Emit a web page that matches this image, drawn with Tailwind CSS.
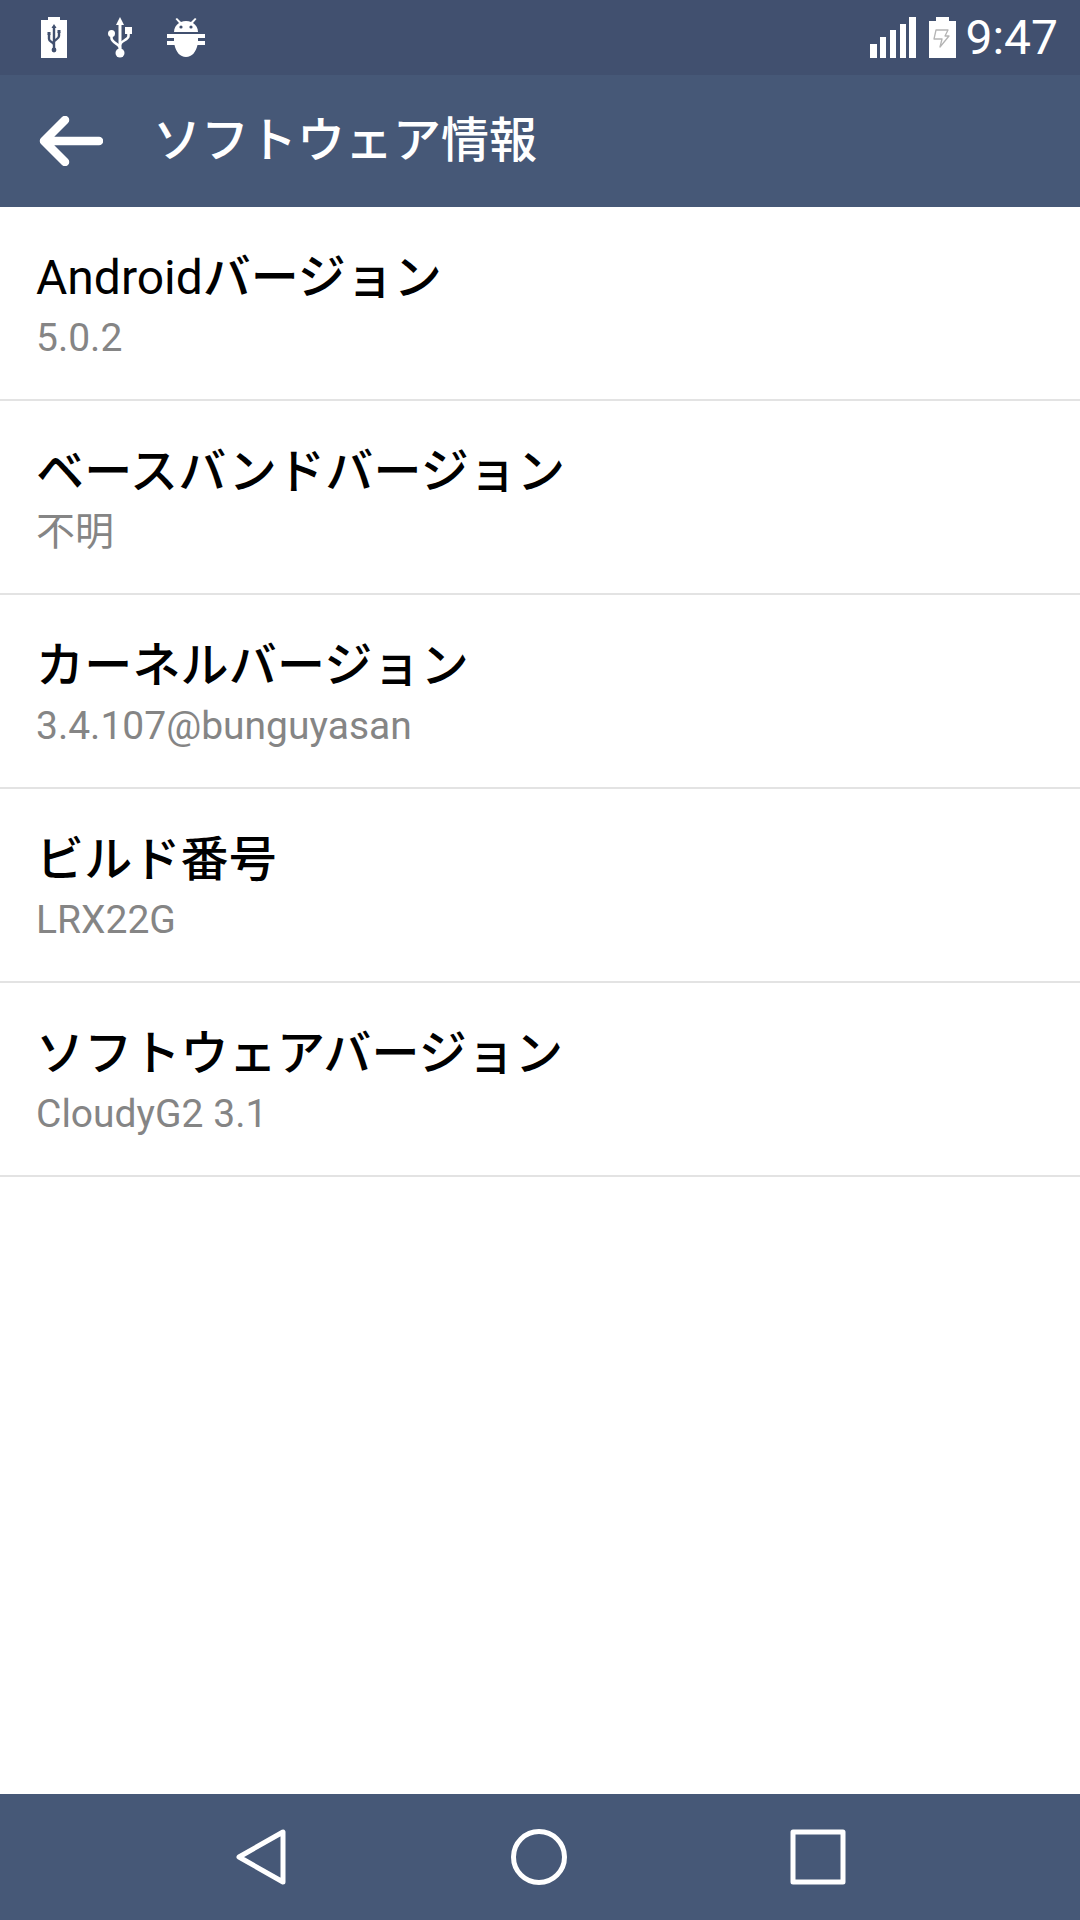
<!DOCTYPE html>
<html lang="ja">
<head>
  <meta charset="UTF-8">
  <meta name="viewport" content="width=device-width, initial-scale=1.0">
  <title>ソフトウェア情報</title>
  <script src="https://cdn.jsdelivr.net/npm/@tailwindcss/browser@4"></script>
</head>
<body class="bg-white">
<div class="flex h-[1920px] w-[1080px] flex-col overflow-hidden font-['Roboto','Noto_Sans_CJK_JP',sans-serif]">

  <!-- Status bar -->
  <div class="flex h-[75px] shrink-0 items-center bg-[#41506f] pl-[41px] pr-[22px] text-white">
    <svg class="h-[41px] w-[26px]" viewBox="0 0 26 41">
      <path fill="#fff" d="M7 0h12v3h7v38H0V3h7z"/>
      <g fill="none" stroke="#41506f" stroke-width="2.400">
        <path d="M13 9v24M8 17v5c0 3 5 3 5 6M18 15v4c0 3-5 4-5 6"/>
      </g>
      <path fill="#41506f" d="M13 7l2.500 4h-5zM6.500 15h3v3h-3zM16.500 13h3v3h-3z"/>
      <circle cx="13" cy="33" r="2.400" fill="#41506f"/>
    </svg>
    <svg class="ml-[41px] h-[41px] w-[24px]" viewBox="0 0 24 41">
      <path fill="#fff" d="M12 0l4 8h-2.500v25h-3V8H8z"/>
      <circle cx="12" cy="36" r="4.500" fill="#fff"/>
      <circle cx="3.500" cy="16.500" r="3.500" fill="#fff"/>
      <path fill="#fff" d="M17 10h7v7h-7z"/>
      <path fill="none" stroke="#fff" stroke-width="2.600" d="M3.500 18v3c0 5 8.500 6 8.500 10M20.500 16v3c0 4-8.500 5-8.500 9"/>
    </svg>
    <svg class="ml-[35px] h-[39px] w-[38px]" viewBox="0 0 38 39">
      <path fill="#fff" d="M7 14c0-4 2-7 5-9L8.500 1 10 0l4 4c3-1.500 7-1.500 10 0l4-4 1.500 1L26 5c3 2 5 5 5 9z"/>
      <circle cx="14" cy="9" r="1.600" fill="#41506f"/>
      <circle cx="24" cy="9" r="1.600" fill="#41506f"/>
      <path fill="#fff" d="M0 16h38v4H31v3h7v4h-7.500C29 34 25 39 19 39S9 34 7.500 27H0v-4h7v-3H0z"/>
    </svg>

    <svg class="ml-auto h-[41px] w-[46px]" viewBox="0 0 46 41" fill="#fff">
      <path d="M0 27h7v14H0zM10 20h6v21h-6zM20 13h6v28h-6zM30 7h6v34h-6zM39 0h7v41h-7z"/>
    </svg>
    <svg class="ml-[13px] h-[41px] w-[27px]" viewBox="0 0 27 41">
      <path fill="#fff" d="M7 0h13v4h7v37H0V4h7z"/>
      <path fill="none" stroke="#b5b5b5" stroke-width="1.300" stroke-linejoin="round" d="M7 13h12l-3 6h4l-9 11 2-8H5z"/>
    </svg>
    <span class="ml-[9px] text-[48px] leading-none">9:47</span>
  </div>

  <!-- Action bar -->
  <div class="flex h-[132px] shrink-0 items-center bg-[#465877] pl-[39px] text-white">
    <svg class="h-[50px] w-[64px]" viewBox="0 0 64 50" fill="none" stroke="#fff" stroke-width="8.500" stroke-linecap="round" stroke-linejoin="round">
      <path d="M60 25H5M26 4L5 25l21 21"/>
    </svg>
    <span class="ml-[50px] text-[48px] leading-none font-medium">ソフトウェア情報</span>
  </div>

  <!-- Settings rows -->
  <div class="flex-1">
    <div class="h-[194px] border-b-2 border-[#e3e3e3] pl-[36px] pt-[41px]">
      <div class="text-[48px] leading-[60px] text-black">Android<span class="font-medium">バージョン</span></div>
      <div class="mt-[4px] text-[39px] leading-[52px] text-[#858585]">5.0.2</div>
    </div>
    <div class="h-[194px] border-b-2 border-[#e3e3e3] pl-[36px] pt-[41px]">
      <div class="text-[48px] leading-[60px] tracking-[0.2px] font-medium text-black">ベースバンドバージョン</div>
      <div class="mt-[4px] text-[39px] leading-[52px] text-[#858585]">不明</div>
    </div>
    <div class="h-[194px] border-b-2 border-[#e3e3e3] pl-[36px] pt-[41px]">
      <div class="text-[48px] leading-[60px] tracking-[0.2px] font-medium text-black">カーネルバージョン</div>
      <div class="mt-[4px] text-[39px] leading-[52px] text-[#858585]">3.4.107@bunguyasan</div>
    </div>
    <div class="h-[194px] border-b-2 border-[#e3e3e3] pl-[36px] pt-[41px]">
      <div class="text-[48px] leading-[60px] tracking-[0.2px] font-medium text-black">ビルド番号</div>
      <div class="mt-[4px] text-[39px] leading-[52px] text-[#858585]">LRX22G</div>
    </div>
    <div class="h-[194px] border-b-2 border-[#e3e3e3] pl-[36px] pt-[41px]">
      <div class="text-[48px] leading-[60px] tracking-[0.2px] font-medium text-black">ソフトウェアバージョン</div>
      <div class="mt-[4px] text-[39px] leading-[52px] text-[#858585]">CloudyG2 3.1</div>
    </div>
  </div>

  <!-- Navigation bar -->
  <div class="flex h-[126px] shrink-0 items-center justify-between bg-[#465877] pl-[236px] pr-[234px]">
    <svg class="h-[56px] w-[50px]" viewBox="0 0 50 56" fill="none" stroke="#fff" stroke-width="5" stroke-linejoin="round">
      <path d="M47 3v50L3 28z"/>
    </svg>
    <svg class="ml-[2px] h-[56px] w-[56px]" viewBox="0 0 56 56" fill="none" stroke="#fff" stroke-width="5">
      <circle cx="28" cy="28" r="25.500"/>
    </svg>
    <svg class="h-[56px] w-[56px]" viewBox="0 0 56 56" fill="none" stroke="#fff" stroke-width="5" stroke-linejoin="round">
      <path d="M3 3h50v50H3z"/>
    </svg>
  </div>
</div>
</body>
</html>
